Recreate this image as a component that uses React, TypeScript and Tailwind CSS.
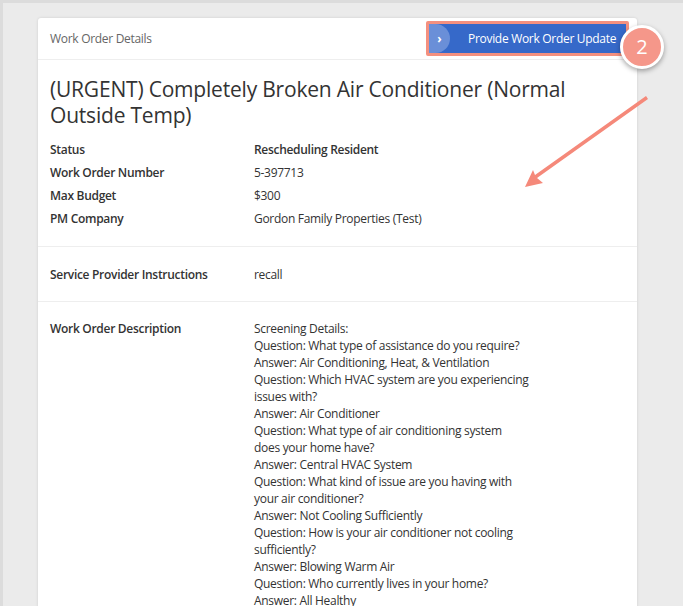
import React from "react";

const rows = [
  { label: "Status", value: "Rescheduling Resident", strong: true },
  { label: "Work Order Number", value: "5-397713" },
  { label: "Max Budget", value: "$300" },
  { label: "PM Company", value: "Gordon Family Properties (Test)" },
];

const description = [
  "Screening Details:",
  "Question: What type of assistance do you require?",
  "Answer: Air Conditioning, Heat, & Ventilation",
  "Question: Which HVAC system are you experiencing issues with?",
  "Answer: Air Conditioner",
  "Question: What type of air conditioning system does your home have?",
  "Answer: Central HVAC System",
  "Question: What kind of issue are you having with your air conditioner?",
  "Answer: Not Cooling Sufficiently",
  "Question: How is your air conditioner not cooling sufficiently?",
  "Answer: Blowing Warm Air",
  "Question: Who currently lives in your home?",
  "Answer: All Healthy",
];

export default function App() {
  return (
    <div
      className="relative h-[606px] w-[683px] overflow-hidden border-t-[3px] border-l-[3px] border-[#dcdcdc] bg-[#ebebeb] text-[#333]"
      style={{ fontFamily: '"Open Sans", "Noto Sans", sans-serif' }}
    >
      <div className="ml-[35px] mt-[15px] w-[599px] rounded-[3px] bg-white shadow-[0_0_3px_rgba(0,0,0,0.12)]">
        {/* header */}
        <div className="flex h-[42px] items-center justify-between border-b border-[#eeeeee] pl-[12px] pr-[8px]">
          <span className="text-[12px] tracking-[-0.3px] text-[#666]">Work Order Details</span>
          <div className="rounded-[2px] border-[3px] border-[#f4907f] p-0">
            <button className="flex h-[29px] w-[197px] items-center bg-[#3669c9] text-white">
              <span className="flex h-full w-[21px] items-center justify-center rounded-r-full bg-[#6a8fd8] text-[12px] font-bold">
                ›
              </span>
              <span className="ml-[18px] text-[12px] tracking-[-0.3px]">Provide Work Order Update</span>
            </button>
          </div>
        </div>

        <div className="px-[12px]">
          <h1 className="pt-[16px] text-[21px] leading-[26px] tracking-[-0.2px] text-[#333]">
            (URGENT) Completely Broken Air Conditioner (Normal Outside Temp)
          </h1>

          <div className="mt-[10px] pb-[16px]">
            {rows.map((r) => (
              <div key={r.label} className="grid grid-cols-[204px_1fr] text-[12px] leading-[23px] tracking-[-0.3px]">
                <span className="font-semibold">{r.label}</span>
                <span className={r.strong ? "font-semibold" : ""}>{r.value}</span>
              </div>
            ))}
          </div>
        </div>

        <div className="border-t border-[#eeeeee] px-[12px] pb-[15px] pt-[16px]">
          <div className="grid grid-cols-[204px_1fr] text-[12px] leading-[23px] tracking-[-0.3px]">
            <span className="font-semibold">Service Provider Instructions</span>
            <span>recall</span>
          </div>
        </div>

        <div className="border-t border-[#eeeeee] px-[12px] pt-[18px]">
          <div className="grid grid-cols-[204px_1fr] text-[12px] leading-[17px] tracking-[-0.3px]">
            <span className="font-semibold">Work Order Description</span>
            <div className="w-[276px]">
              {description.map((d) => (
                <div key={d}>{d}</div>
              ))}
            </div>
          </div>
        </div>
      </div>

      {/* annotation badge */}
      <div className="absolute left-[617px] top-[22px] flex h-[44px] w-[44px] items-center justify-center rounded-full border-[3px] border-white bg-[#f5978a] text-[20px] text-white shadow-[0_2px_5px_rgba(0,0,0,0.35)]">
        2
      </div>

      {/* annotation arrow */}
      <svg className="absolute left-0 top-0" width="683" height="606" viewBox="-3 -3 683 606">
        <polygon points="640,90 642,93 531,172 537,177 519,181 527,164 529,169" fill="#f5897a" />
      </svg>
    </div>
  );
}
